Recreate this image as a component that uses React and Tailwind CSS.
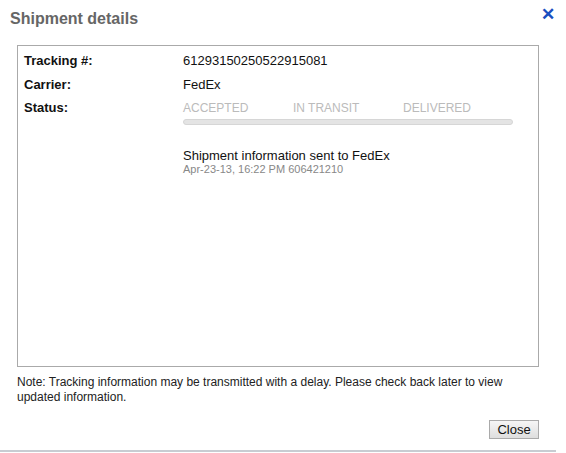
const rows = [
  { label: "Tracking #:", value: "61293150250522915081" },
  { label: "Carrier:", value: "FedEx" },
];

const steps = ["ACCEPTED", "IN TRANSIT", "DELIVERED"];

export default function App() {
  return (
    <div
      className="relative w-[566px] h-[453px] bg-white text-[#111]"
      style={{ fontFamily: '"Liberation Sans", Arial, sans-serif' }}
    >
      {/* header */}
      <div className="flex items-start justify-between pl-[10px] pr-[11px] pt-[7px] h-[45px]">
        <h2 className="text-[16px] leading-[20px] font-bold text-[#666] mt-[2px]">Shipment details</h2>
        <button className="text-[#1a4fc0] text-[17px] leading-[18px] font-bold -mt-[1px]">✕</button>
      </div>

      {/* details box */}
      <div className="mx-[17px] w-[522px] h-[322px] border border-[#aaa] pt-[7px] pl-[6px]">
        {rows.map((r) => (
          <div key={r.label} className="flex h-[24px] text-[13px] leading-[16px]">
            <div className="w-[159px] font-bold">{r.label}</div>
            <div>{r.value}</div>
          </div>
        ))}
        <div className="flex text-[13px] leading-[16px] -mt-[1px]">
          <div className="w-[159px] font-bold">Status:</div>
          <div className="w-[330px]">
            <div className="flex text-[12px] leading-[14px] text-[#bbb] pt-[1px]">
              {steps.map((s) => (
                <div key={s} className="w-[110px]">{s}</div>
              ))}
            </div>
            <div className="mt-[4px] h-[6px] w-[330px] rounded-full bg-[#e4e4e4] border border-[#d6d6d6]" />
            <div className="mt-[23px] text-[13px] leading-[15px] text-[#111]">
              Shipment information sent to FedEx
            </div>
            <div className="text-[11px] leading-[13px] text-[#888]">Apr-23-13, 16:22 PM 606421210</div>
          </div>
        </div>
      </div>

      {/* note */}
      <p className="mt-[8px] ml-[17px] w-[520px] text-[12px] leading-[15px] text-[#222]">
        Note: Tracking information may be transmitted with a delay. Please check back later to view
        updated information.
      </p>

      <div className="flex justify-end pr-[27px] mt-[15px]">
        <button className="w-[50px] h-[19px] border border-[#aaa] bg-gradient-to-b from-[#f6f6f6] to-[#dedede] text-[13px] leading-[16px] text-[#111]">
          Close
        </button>
      </div>

      <div className="absolute left-0 bottom-[1px] w-[556px] h-[2px] bg-[#c8ccd2]" />
    </div>
  );
}
